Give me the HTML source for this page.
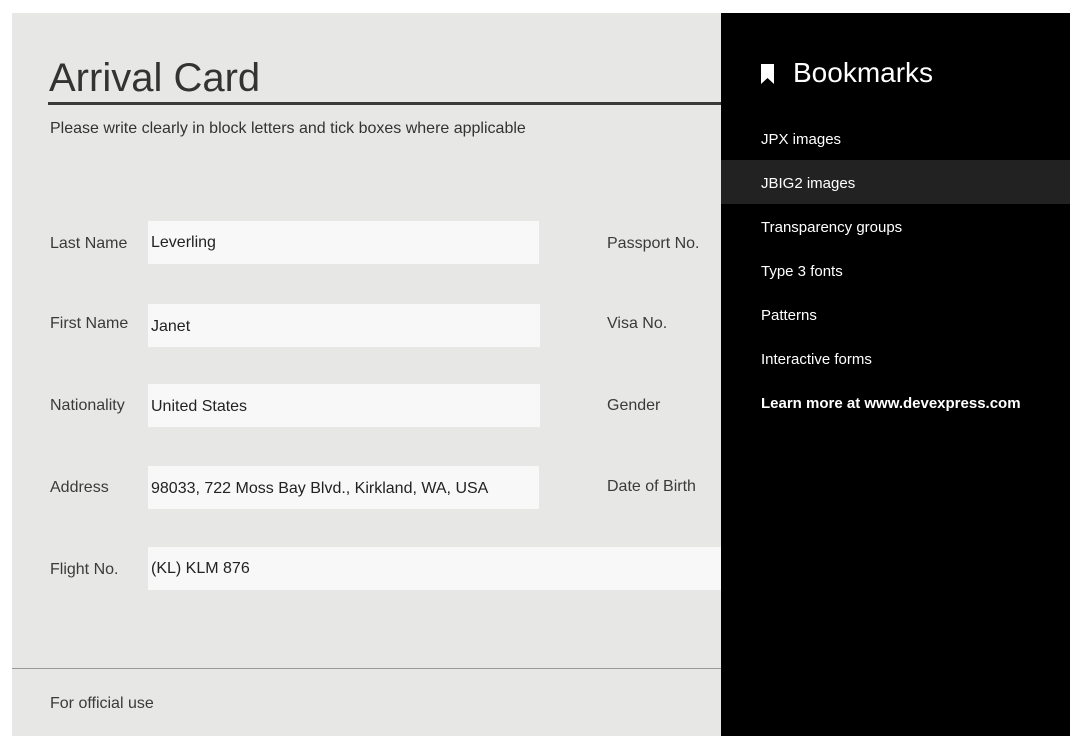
<!DOCTYPE html>
<html><head><style>
body{margin:0;width:1082px;height:748px;background:#fff;position:relative;overflow:hidden;font-family:"Liberation Sans",sans-serif}
#paper{position:absolute;left:12px;top:13px;width:709px;height:723px;background:#e7e7e5;overflow:hidden}
.t{position:absolute;color:#333}
.lbl{position:absolute;font-size:16px;color:#3a3a3a}
.box{position:absolute;background:#f8f8f8;height:43px;font-size:16px;color:#222;line-height:43px;padding-left:3px;box-sizing:border-box}
#panel{position:absolute;left:721px;top:13px;width:349px;height:723px;background:#000;color:#fff;font-family:"Liberation Sans",sans-serif}
.it{position:absolute;left:40px;font-size:15px;color:#fff}
</style></head><body>
<div id="paper">
<div class="t" style="left:37px;top:43px;font-size:40px;color:#333">Arrival Card</div>
<div style="position:absolute;left:36px;top:89px;width:680px;height:3px;background:#3a3a3a"></div>
<div class="t" style="left:38px;top:107px;font-size:16px">Please write clearly in block letters and tick boxes where applicable</div>
<div class="lbl" style="left:38px;top:222px">Last Name</div>
<div class="box" style="left:136px;top:208px;width:391px">Leverling</div>
<div class="lbl" style="left:595px;top:222px">Passport No.</div>
<div class="lbl" style="left:38px;top:302px">First Name</div>
<div class="box" style="left:136px;top:291px;width:392px;padding-top:1px">Janet</div>
<div class="lbl" style="left:595px;top:302px">Visa No.</div>
<div class="lbl" style="left:38px;top:384px">Nationality</div>
<div class="box" style="left:136px;top:371px;width:392px;padding-top:1px">United States</div>
<div class="lbl" style="left:595px;top:384px">Gender</div>
<div class="lbl" style="left:38px;top:466px">Address</div>
<div class="box" style="left:136px;top:453px;width:391px;padding-top:1px">98033, 722 Moss Bay Blvd., Kirkland, WA, USA</div>
<div class="lbl" style="left:595px;top:465px">Date of Birth</div>
<div class="lbl" style="left:38px;top:548px">Flight No.</div>
<div class="box" style="left:136px;top:534px;width:580px">(KL) KLM 876</div>
<div style="position:absolute;left:0;top:655px;width:709px;height:1px;background:#999"></div>
<div class="lbl" style="left:38px;top:682px">For official use</div>
</div>
<div id="panel">
<svg style="position:absolute;left:40px;top:51px" width="13" height="20" viewBox="0 0 13 20"><path d="M0 0H13V20L6.5 14L0 20Z" fill="#fff"/></svg>
<div style="position:absolute;left:72px;top:44px;font-size:28px">Bookmarks</div>
<div class="it" style="top:118px">JPX images</div>
<div style="position:absolute;left:0;top:147px;width:349px;height:44px;background:#222"></div>
<div class="it" style="top:162px">JBIG2 images</div>
<div class="it" style="top:206px">Transparency groups</div>
<div class="it" style="top:250px">Type 3 fonts</div>
<div class="it" style="top:294px">Patterns</div>
<div class="it" style="top:338px">Interactive forms</div>
<div class="it" style="top:382px;font-weight:bold">Learn more at www.devexpress.com</div>
</div>
</body></html>
